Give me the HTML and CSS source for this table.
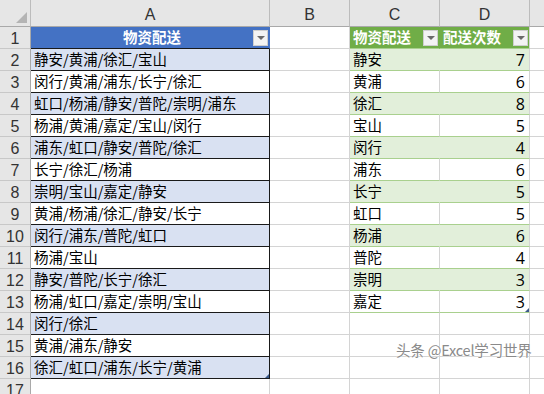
FILE: index.html
```html
<!DOCTYPE html>
<html lang="zh-CN">
<head>
<meta charset="utf-8">
<link rel="stylesheet" href="styles.css">
</head>
<body>
<div class="sheet">
  <div class="c hd corner"><span class="corner-tri"></span></div>
  <div class="c hd">A</div>
  <div class="c hd">B</div>
  <div class="c hd">C</div>
  <div class="c hd">D</div>
  <div class="c hd last"></div>

  <div class="c rh">1</div>
  <div class="c ta-h"><span class="ttl">物资配送</span><span class="dd"></span></div>
  <div class="c"></div>
  <div class="c tg-h gC"><span>物资配送</span><span class="dd"></span></div>
  <div class="c tg-h"><span>配送次数</span><span class="dd"></span></div>
  <div class="c last"></div>

  <div class="c rh">2</div>
  <div class="c ta band">静安/黄浦/徐汇/宝山</div>
  <div class="c"></div>
  <div class="c tg band gC">静安</div>
  <div class="c tg band num">7</div>
  <div class="c last"></div>

  <div class="c rh">3</div>
  <div class="c ta">闵行/黄浦/浦东/长宁/徐汇</div>
  <div class="c"></div>
  <div class="c tg">黄浦</div>
  <div class="c tg num">6</div>
  <div class="c last"></div>

  <div class="c rh">4</div>
  <div class="c ta band">虹口/杨浦/静安/普陀/崇明/浦东</div>
  <div class="c"></div>
  <div class="c tg band gC">徐汇</div>
  <div class="c tg band num">8</div>
  <div class="c last"></div>

  <div class="c rh">5</div>
  <div class="c ta">杨浦/黄浦/嘉定/宝山/闵行</div>
  <div class="c"></div>
  <div class="c tg">宝山</div>
  <div class="c tg num">5</div>
  <div class="c last"></div>

  <div class="c rh">6</div>
  <div class="c ta band">浦东/虹口/静安/普陀/徐汇</div>
  <div class="c"></div>
  <div class="c tg band gC">闵行</div>
  <div class="c tg band num">4</div>
  <div class="c last"></div>

  <div class="c rh">7</div>
  <div class="c ta">长宁/徐汇/杨浦</div>
  <div class="c"></div>
  <div class="c tg">浦东</div>
  <div class="c tg num">6</div>
  <div class="c last"></div>

  <div class="c rh">8</div>
  <div class="c ta band">崇明/宝山/嘉定/静安</div>
  <div class="c"></div>
  <div class="c tg band gC">长宁</div>
  <div class="c tg band num">5</div>
  <div class="c last"></div>

  <div class="c rh">9</div>
  <div class="c ta">黄浦/杨浦/徐汇/静安/长宁</div>
  <div class="c"></div>
  <div class="c tg">虹口</div>
  <div class="c tg num">5</div>
  <div class="c last"></div>

  <div class="c rh">10</div>
  <div class="c ta band">闵行/浦东/普陀/虹口</div>
  <div class="c"></div>
  <div class="c tg band gC">杨浦</div>
  <div class="c tg band num">6</div>
  <div class="c last"></div>

  <div class="c rh">11</div>
  <div class="c ta">杨浦/宝山</div>
  <div class="c"></div>
  <div class="c tg">普陀</div>
  <div class="c tg num">4</div>
  <div class="c last"></div>

  <div class="c rh">12</div>
  <div class="c ta band">静安/普陀/长宁/徐汇</div>
  <div class="c"></div>
  <div class="c tg band gC">崇明</div>
  <div class="c tg band num">3</div>
  <div class="c last"></div>

  <div class="c rh">13</div>
  <div class="c ta">杨浦/虹口/嘉定/崇明/宝山</div>
  <div class="c"></div>
  <div class="c tg">嘉定</div>
  <div class="c tg num">3<span class="handle"></span></div>
  <div class="c last"></div>

  <div class="c rh">14</div>
  <div class="c ta band">闵行/徐汇</div>
  <div class="c"></div>
  <div class="c"></div>
  <div class="c"></div>
  <div class="c last"></div>

  <div class="c rh">15</div>
  <div class="c ta">黄浦/浦东/静安</div>
  <div class="c"></div>
  <div class="c"></div>
  <div class="c"></div>
  <div class="c last"></div>

  <div class="c rh">16</div>
  <div class="c ta band">徐汇/虹口/浦东/长宁/黄浦<span class="handle"></span></div>
  <div class="c"></div>
  <div class="c"></div>
  <div class="c"></div>
  <div class="c last"></div>

  <div class="c rh">17</div>
  <div class="c"></div>
  <div class="c"></div>
  <div class="c"></div>
  <div class="c"></div>
  <div class="c last"></div>
</div>
<div class="watermark">头条 @Excel学习世界</div>
</body>
</html>
```
FILE: styles.css
```css
html, body {
  margin: 0;
  padding: 0;
  background: #ffffff;
  overflow: hidden;
}
body {
  width: 544px;
  height: 394px;
  position: relative;
  font-family: "Noto Sans CJK SC", "Noto Sans", sans-serif;
}
.sheet {
  display: grid;
  grid-template-columns: 31px 239px 80px 90px 90px 30px;
  grid-template-rows: 27px repeat(17, 22px);
}
.c {
  box-sizing: border-box;
  border-right: 1px solid #d4d4d4;
  border-bottom: 1px solid #d4d4d4;
  font-size: 14.5px;
  color: #000;
  display: flex;
  align-items: center;
  padding: 0 3px;
  white-space: nowrap;
  overflow: hidden;
  position: relative;
  line-height: 1;
}
.hd {
  background: #e6e6e6;
  border-right-color: #bcbcbc;
  border-bottom-color: #a9a9a9;
  justify-content: center;
  font-family: "Liberation Sans", "Noto Sans", sans-serif;
  font-size: 16px;
  color: #333;
  padding-top: 4px;
}
.corner { position: relative; }
.corner-tri {
  position: absolute;
  right: 3px;
  bottom: 3px;
  width: 0;
  height: 0;
  border-left: 11px solid transparent;
  border-bottom: 11px solid #b4b4b4;
}
.rh {
  background: #e6e6e6;
  border-right-color: #a9a9a9;
  border-bottom-color: #c8c8c8;
  justify-content: center;
  font-family: "Liberation Sans", "Noto Sans", sans-serif;
  font-size: 16px;
  color: #333;
  padding: 2px 0 0 0;
}
.last { border-right: none; }

/* blue table */
.ta-h {
  background: #4472c4;
  border-right-color: #4472c4;
  border-bottom-color: #1a1a1a;
  color: #fff;
  font-weight: bold;
  justify-content: center;
  padding: 0;
}
.ta-h .ttl { margin-left: 4px; }
.ta-h .dd { position: absolute; right: 1px; top: 3px; }
.ta {
  background: #fff;
  border-right-color: #1a1a1a;
  border-bottom-color: #1a1a1a;
}
.ta.band { background: #d9e1f2; }

/* green table */
.tg-h {
  background: #70ad47;
  border-bottom-color: #a9d08e;
  color: #fff;
  font-weight: bold;
  justify-content: space-between;
  padding: 0 1px 0 3px;
}
.tg-h.gC { border-right-color: #70ad47; }
.tg {
  border-bottom-color: #a9d08e;
}
.tg.band { background: #e2efda; }
.tg.band.gC { border-right-color: #e2efda; }
.num {
  justify-content: flex-end;
  font-family: "Open Sans", "Liberation Sans", sans-serif;
  font-size: 16px;
  padding-right: 4px;
  padding-top: 1px;
}

/* dropdown buttons */
.dd {
  box-sizing: border-box;
  width: 15px;
  height: 16px;
  background: #f3f3f3;
  border: 1px solid #cfcfcf;
  display: inline-block;
  position: relative;
}
.dd::after {
  content: "";
  position: absolute;
  left: 3px;
  top: 5px;
  width: 0;
  height: 0;
  border-left: 4px solid transparent;
  border-right: 4px solid transparent;
  border-top: 4px solid #6a6a6a;
}

.handle {
  position: absolute;
  right: 0;
  bottom: 0;
  width: 0;
  height: 0;
  border-left: 4px solid transparent;
  border-bottom: 4px solid #3b5a8a;
}

.watermark {
  position: absolute;
  left: 396px;
  top: 339px;
  font-size: 14.5px;
  color: #8a8a8a;
  font-family: "Noto Sans CJK SC", "Noto Sans", sans-serif;
  text-shadow: 0 0 1px #fff, 0 0 2px #fff;
  letter-spacing: -0.2px;
}
```
